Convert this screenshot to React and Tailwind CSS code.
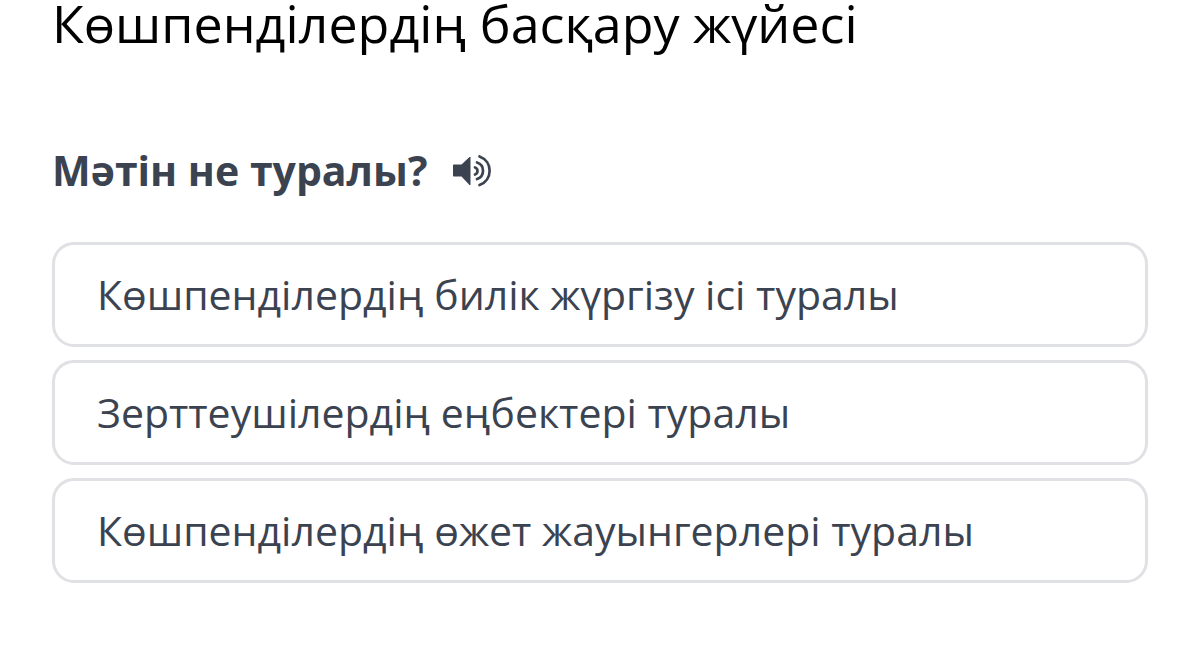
import { useState } from 'react';

const answers = [
  'Көшпенділердің билік жүргізу ісі туралы',
  'Зерттеушілердің еңбектері туралы',
  'Көшпенділердің өжет жауынгерлері туралы',
];

function SpeakerIcon() {
  return (
    <svg viewBox="0 0 40 36" className="w-10 h-9" fill="none" aria-hidden="true">
      <path d="M3 12.500h7.500L18.500 5h1v28h-1l-8-8.500H3c-.6 0-1-.4-1-1v-10c0-.6.400-1 1-1z" fill="currentColor" />
      <path d="M24 15.500c3.300 1 3.300 6 0 7M26 10.500c8 2.500 8 14 0 16.500M28.500 4.500c13.500 5 13.500 23.500 0 28.500" stroke="currentColor" strokeWidth="2.700" strokeLinecap="round" />
    </svg>
  );
}

export default function App() {
  const [selected, setSelected] = useState(null);

  return (
    <main className="min-h-screen bg-white px-13 font-['Open_Sans','Noto_Sans',sans-serif] text-[#3b4351]">
      <h1 className="text-[52px] leading-[46px] text-black">Көшпенділердің басқару жүйесі</h1>
      <div className="mt-25 flex items-center gap-6">
        <h2 className="text-[41px] leading-[48px] font-bold">Мәтін не туралы?</h2>
        <button type="button" aria-label="Тыңдау"><SpeakerIcon /></button>
      </div>
      <div className="mt-12 flex flex-col gap-[13px]">
        {answers.map((answer) => (
          <button
            key={answer}
            type="button"
            aria-pressed={selected === answer}
            onClick={() => setSelected(answer)}
            className="w-full rounded-[22px] border-3 border-[#e0e1e4] px-[42px] py-6 text-left text-[41px] leading-[51px]"
          >
            {answer}
          </button>
        ))}
      </div>
    </main>
  );
}
